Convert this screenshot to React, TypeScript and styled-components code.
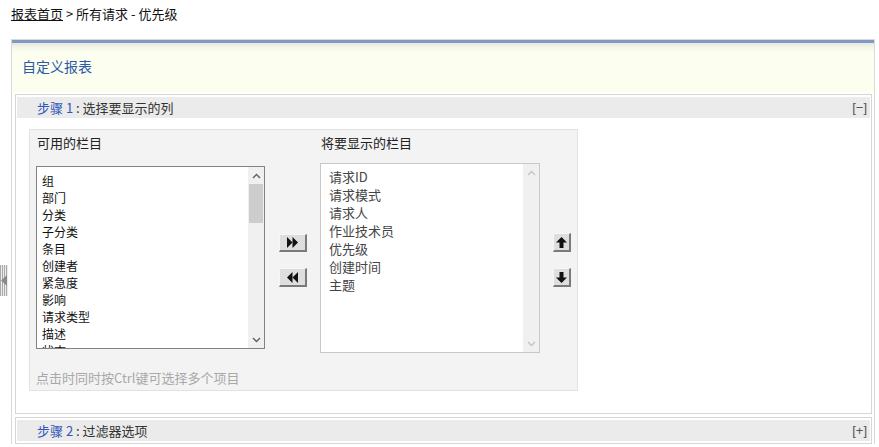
import React from "react";
import styled, { createGlobalStyle } from "styled-components";

const Global = createGlobalStyle`
  html, body { margin: 0; padding: 0; background: #fff; }
  body {
    font-family: "Noto Sans CJK SC", "Noto Sans", "Liberation Sans", sans-serif;
    font-size: 13px;
    color: #222;
  }
  * { box-sizing: border-box; }
`;

const Page = styled.div`
  position: relative;
  width: 879px;
  height: 447px;
  overflow: hidden;
  padding: 6px 0 0 11px;
`;

const Breadcrumb = styled.div`
  font-size: 13px;
  line-height: 16px;
  height: 16px;
  color: #111;
  white-space: nowrap;
`;

const CrumbLink = styled.a`
  color: #111;
  text-decoration: underline;
`;

const Panel = styled.div`
  margin-top: 17px;
  width: 864px;
  border: 1px solid #d9d9d9;
  border-bottom: none;
`;

const PanelHeader = styled.div`
  border-top: 3px solid #7f99c3;
  height: 53px;
  background: linear-gradient(#e3e8dc 0px, #f6f9ea 5px, #fcfff0 10px);
  padding-left: 10px;
  line-height: 46px;
  font-size: 14px;
  color: #2b5aa6;
`;

const StepBox = styled.div<{ $gap: number }>`
  margin: ${(p) => p.$gap}px 2px 0 3px;
  border: 1px solid #d6d6d6;
  padding: 2px 1px;
`;

const StepHeader = styled.div`
  display: flex;
  align-items: center;
  height: 21px;
  background: #ebebeb;
  padding: 0 3px 0 20px;
  font-size: 13px;
  line-height: 20px;
  color: #333;
`;

const StepNo = styled.span`
  color: #2f57b8;
`;

const StepTitle = styled.span`
  flex: 1;
`;

const Toggle = styled.span`
  color: #555;
  font-family: "Liberation Sans", sans-serif;
  font-size: 13px;
`;

const StepBody = styled.div`
  padding: 11px 0 20px 12px;
`;

const InnerBox = styled.div`
  width: 549px;
  background: #f3f3f3;
  border: 1px solid #e2e2e2;
  padding: 5px 6px 4px 6px;
`;

const Columns = styled.div`
  display: flex;
  align-items: flex-start;
`;

const Column = styled.div<{ $w: number; $ml: number }>`
  width: ${(p) => p.$w}px;
  margin-left: ${(p) => p.$ml}px;
  display: flex;
  flex-direction: column;
`;

const Label = styled.div`
  font-size: 13px;
  line-height: 16px;
  padding-left: 1px;
  color: #222;
`;

const ListBox = styled.div<{ $mt: number; $h: number; $disabled?: boolean }>`
  margin-top: ${(p) => p.$mt}px;
  height: ${(p) => p.$h}px;
  border: 1px solid ${(p) => (p.$disabled ? "#c8c8c8" : "#828282")};
  background: #fff;
  display: flex;
  overflow: hidden;
`;

const Items = styled.div<{ $pt: number; $pl: number; $fs: number; $lh: number; $color: string }>`
  flex: 1;
  overflow: hidden;
  padding: ${(p) => p.$pt}px 0 0 ${(p) => p.$pl}px;
  font-size: ${(p) => p.$fs}px;
  line-height: ${(p) => p.$lh}px;
  color: ${(p) => p.$color};
  white-space: nowrap;
`;

const Scrollbar = styled.div`
  width: 16px;
  background: #f0f0f0;
  display: flex;
  flex-direction: column;
`;

const ArrowCell = styled.div`
  height: 17px;
  display: flex;
  align-items: center;
  justify-content: center;
`;

const Thumb = styled.div`
  height: 39px;
  margin: 0 1px;
  background: #cdcdcd;
`;

const Spacer = styled.div`
  flex: 1;
`;

const ButtonStack = styled.div<{ $pt: number; $gap: number }>`
  display: flex;
  flex-direction: column;
  gap: ${(p) => p.$gap}px;
  padding-top: ${(p) => p.$pt}px;
`;

const SqButton = styled.button<{ $w: number; $h: number }>`
  width: ${(p) => p.$w}px;
  height: ${(p) => p.$h}px;
  padding: 0;
  margin: 0;
  display: flex;
  align-items: center;
  justify-content: center;
  background: #dedede;
  border-style: solid;
  border-width: 1px 2px 2px 1px;
  border-color: #f6f6f6 #7a7a7a #7a7a7a #f6f6f6;
  cursor: pointer;
`;

const Hint = styled.div`
  margin-top: 17px;
  font-size: 13px;
  line-height: 16px;
  color: #a8a8a8;
`;

const Grip = styled.div`
  position: absolute;
  left: 0;
  top: 265px;
  width: 8px;
  height: 31px;
`;

const Chevron = ({ up, color }: { up: boolean; color: string }) => (
  <svg width="9" height="6" viewBox="0 0 9 6">
    <polyline
      points={up ? "1,5 4.5,1.5 8,5" : "1,1 4.5,4.5 8,1"}
      fill="none"
      stroke={color}
      strokeWidth="1.4"
    />
  </svg>
);

const DoubleRight = () => (
  <svg width="13" height="11" viewBox="0 0 13 11">
    <polygon points="1,0 6.5,5.5 1,11" fill="#111" />
    <polygon points="6.5,0 12,5.5 6.5,11" fill="#111" />
  </svg>
);

const DoubleLeft = () => (
  <svg width="13" height="11" viewBox="0 0 13 11">
    <polygon points="6.5,0 1,5.5 6.5,11" fill="#111" />
    <polygon points="12,0 6.5,5.5 12,11" fill="#111" />
  </svg>
);

const ArrowUp = () => (
  <svg width="11" height="11" viewBox="0 0 11 11">
    <polygon points="5.5,0 11,5.5 7.5,5.5 7.5,11 3.5,11 3.5,5.5 0,5.5" fill="#111" />
  </svg>
);

const ArrowDown = () => (
  <svg width="11" height="11" viewBox="0 0 11 11">
    <polygon points="3.5,0 7.5,0 7.5,5.5 11,5.5 5.5,11 0,5.5 3.5,5.5" fill="#111" />
  </svg>
);

const GripIcon = () => (
  <svg width="8" height="31" viewBox="0 0 8 31">
    <rect x="0" y="0" width="8" height="31" fill="#ececec" />
    <rect x="0" y="0" width="1" height="31" fill="#a9a9a9" />
    <rect x="2" y="0" width="1" height="31" fill="#a9a9a9" />
    <rect x="4" y="0" width="1" height="31" fill="#a9a9a9" />
    <rect x="6" y="0" width="1" height="31" fill="#a9a9a9" />
    <polygon points="7,10 1,15.5 7,21" fill="#8a8a8a" />
  </svg>
);

const available = ["组", "部门", "分类", "子分类", "条目", "创建者", "紧急度", "影响", "请求类型", "描述", "状态"];
const selected = ["请求ID", "请求模式", "请求人", "作业技术员", "优先级", "创建时间", "主题"];

export default function App() {
  return (
    <>
      <Global />
      <Page>
        <Breadcrumb>
          <CrumbLink>报表首页</CrumbLink> &gt; 所有请求 - 优先级
        </Breadcrumb>
        <Panel>
          <PanelHeader>自定义报表</PanelHeader>
          <StepBox $gap={1}>
            <StepHeader>
              <StepTitle>
                <StepNo>步骤 1</StepNo> : 选择要显示的列
              </StepTitle>
              <Toggle>[−]</Toggle>
            </StepHeader>
            <StepBody>
              <InnerBox>
                <Columns>
                  <Column $w={229} $ml={0}>
                    <Label>可用的栏目</Label>
                    <ListBox $mt={15} $h={183}>
                      <Items $pt={5} $pl={5} $fs={12} $lh={17} $color="#111">
                        {available.map((t) => (
                          <div key={t}>{t}</div>
                        ))}
                      </Items>
                      <Scrollbar>
                        <ArrowCell>
                          <Chevron up color="#606060" />
                        </ArrowCell>
                        <Thumb />
                        <Spacer />
                        <ArrowCell>
                          <Chevron up={false} color="#606060" />
                        </ArrowCell>
                      </Scrollbar>
                    </ListBox>
                  </Column>
                  <Column $w={28} $ml={14}>
                    <ButtonStack $pt={99} $gap={16}>
                      <SqButton $w={28} $h={18} title="添加">
                        <DoubleRight />
                      </SqButton>
                      <SqButton $w={28} $h={19} title="移除">
                        <DoubleLeft />
                      </SqButton>
                    </ButtonStack>
                  </Column>
                  <Column $w={220} $ml={13}>
                    <Label>将要显示的栏目</Label>
                    <ListBox $mt={12} $h={190} $disabled>
                      <Items $pt={4} $pl={8} $fs={13} $lh={18} $color="#444">
                        {selected.map((t) => (
                          <div key={t}>{t}</div>
                        ))}
                      </Items>
                      <Scrollbar>
                        <ArrowCell>
                          <Chevron up color="#c4c4c4" />
                        </ArrowCell>
                        <Spacer />
                        <ArrowCell>
                          <Chevron up={false} color="#c4c4c4" />
                        </ArrowCell>
                      </Scrollbar>
                    </ListBox>
                  </Column>
                  <Column $w={18} $ml={13}>
                    <ButtonStack $pt={98} $gap={16}>
                      <SqButton $w={18} $h={19} title="上移">
                        <ArrowUp />
                      </SqButton>
                      <SqButton $w={18} $h={19} title="下移">
                        <ArrowDown />
                      </SqButton>
                    </ButtonStack>
                  </Column>
                </Columns>
                <Hint>点击时同时按Ctrl键可选择多个项目</Hint>
              </InnerBox>
            </StepBody>
          </StepBox>
          <StepBox $gap={3}>
            <StepHeader>
              <StepTitle>
                <StepNo>步骤 2</StepNo> : 过滤器选项
              </StepTitle>
              <Toggle>[+]</Toggle>
            </StepHeader>
          </StepBox>
        </Panel>
        <Grip>
          <GripIcon />
        </Grip>
      </Page>
    </>
  );
}
